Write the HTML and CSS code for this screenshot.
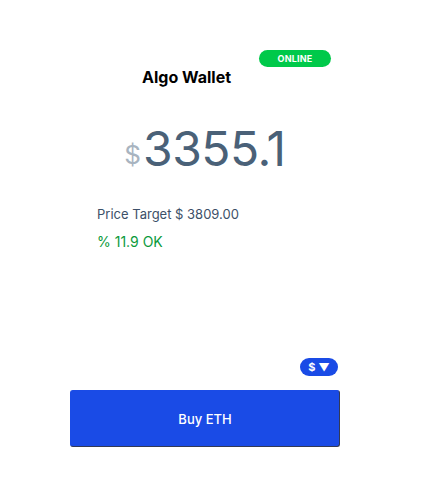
FILE: index.html
```html
<!DOCTYPE html>
<html>
<head>
<meta charset="utf-8">
<link rel="stylesheet" href="styles.css">
</head>
<body>
<div class="app">
  <div class="header">
    <h1 class="title">Algo Wallet</h1>
    <span class="badge">ONLINE</span>
  </div>
  <div class="price"><span class="cur">$</span><span class="amount">3355.1</span></div>
  <div class="info">
    <div class="target">Price Target $ 3809.00</div>
    <div class="change">% 11.9 OK</div>
  </div>
  <div class="controls">
    <button class="pill">$ ▼</button>
  </div>
  <button class="buy">Buy ETH</button>
</div>
</body>
</html>
```
FILE: styles.css
```css
* { box-sizing: border-box; }
body {
  margin: 0;
  background: #fff;
  font-family: Inter, "Noto Sans", sans-serif;
}
.app {
  width: 270px;
  margin-left: 70px;
  padding-top: 50px;
  display: flex;
  flex-direction: column;
}
.header {
  display: flex;
  align-items: flex-start;
  padding-left: 72px;
}
.title {
  margin: 17px 0 0 0;
  font-size: 16px;
  font-weight: 700;
  color: #000;
  line-height: 20px;
}
.badge {
  margin-left: 28px;
  width: 72px;
  height: 17px;
  border-radius: 9px;
  background: #00c94a;
  color: #fff;
  font-size: 9px;
  font-weight: 700;
  display: flex;
  align-items: center;
  justify-content: center;
  letter-spacing: 0.2px;
}
.price {
  margin-top: 34px;
  display: flex;
  justify-content: center;
  align-items: baseline;
  color: #4a6178;
}
.cur {
  font-size: 26px;
  color: #a8b4c0;
  margin-right: 2px;
  position: relative;
  top: -2px;
}
.amount {
  font-size: 48px;
  line-height: 56px;
  letter-spacing: -0.5px;
}
.info {
  padding-left: 27px;
  margin-top: 29px;
}
.target {
  font-size: 13px;
  color: #3c5068;
  line-height: 16px;
}
.change {
  margin-top: 11px;
  font-size: 14px;
  color: #0b9a3b;
  line-height: 18px;
}
.controls {
  display: flex;
  justify-content: flex-end;
  margin-top: 107px;
}
.pill {
  width: 38px;
  height: 18px;
  border: 0;
  border-radius: 9px;
  background: #1a4be6;
  color: #fff;
  font-family: inherit;
  font-size: 11px;
  font-weight: 700;
  padding: 0;
  margin-right: 2px;
}
.buy {
  margin-top: 14px;
  height: 57px;
  width: 270px;
  background: #1a4be6;
  color: #fff;
  border: 1px solid #1a4be6;
  border-right-color: #333a55;
  border-bottom-color: #333a55;
  border-radius: 3px;
  font-family: inherit;
  font-size: 13px;
  font-weight: 500;
}
```
